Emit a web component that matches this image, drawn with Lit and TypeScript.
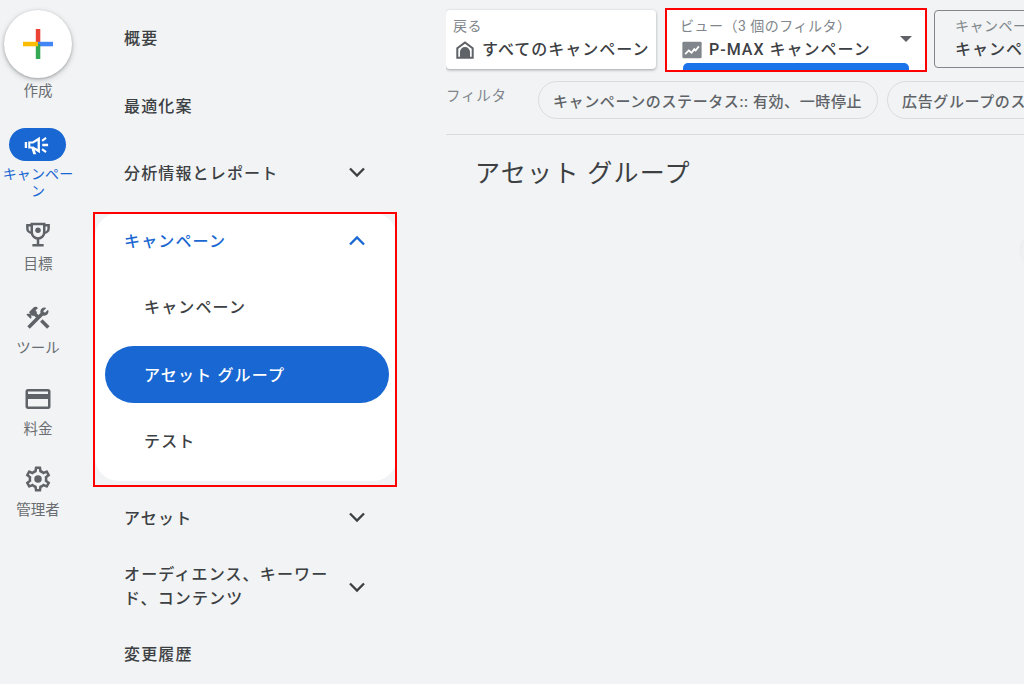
import { LitElement, html, css, svg } from "lit";
import { customElement } from "lit/decorators.js";

const chevDown = html`<svg class="chev" width="24" height="24" viewBox="0 0 24 24"><path d="M5 8.500l7 7 7-7" fill="none" stroke="currentColor" stroke-width="2.300"/></svg>`;
const chevUp = html`<svg class="chev" width="24" height="24" viewBox="0 0 24 24"><path d="M5 15.500l7-7 7 7" fill="none" stroke="currentColor" stroke-width="2.300"/></svg>`;
const icon = (d: unknown, size = 30) => html`<svg width=${size} height=${size} viewBox="0 0 24 24" fill="currentColor">${d}</svg>`;

@customElement("app-root")
export class AppRoot extends LitElement {
  static styles = css`
    :host { display: block; width: 1024px; height: 684px; overflow: hidden; position: relative; background: #f1f3f4; font-family: "Roboto", "Noto Sans CJK JP", sans-serif; color: #3c4043; }
    .page { display: flex; height: 684px; }
    .rail { width: 93px; flex: none; }
    .rail-inner { width: 76px; display: flex; flex-direction: column; align-items: center; }
    .fab { width: 68px; height: 68px; border-radius: 50%; background: #fff; margin-top: 10px; box-shadow: 0 1px 3px rgba(60,64,67,.35), 0 2px 6px rgba(60,64,67,.2); display: flex; align-items: center; justify-content: center; }
    .rail-label { font-size: 14.500px; line-height: 17px; color: #696d71; text-align: center; font-weight: 400; white-space: nowrap; }
    .l-create { margin-top: 4.500px; }
    .pill { width: 57px; height: 33px; border-radius: 17px; background: #1967d2; color: #fff; display: flex; align-items: center; justify-content: center; margin: 28.500px 2px 0 0; }
    .active-label { color: #1967d2; margin-top: 4.500px; width: 76px; white-space: normal; font-size: 14px; letter-spacing: .1px; }
    .ri { display: flex; flex-direction: column; align-items: center; color: #5f6368; }
    .ri svg { display: block; }
    .i-goal { margin-top: 19.500px; }
    .i-tool { margin-top: 31.500px; }
    .i-bill { margin-top: 27.500px; }
    .i-admin { margin-top: 26.500px; }
    .gap5 { margin-top: 6.500px; }
    .gap6 { margin-top: 7.500px; }
    .nav { width: 304px; flex: none; margin-top: 3px; box-sizing: border-box; }
    .row { height: 67.500px; display: flex; align-items: center; justify-content: space-between; padding: 0 28px 0 31px; font-size: 16px; font-weight: 500; color: #3c4043; letter-spacing: 1.150px; box-sizing: border-box; }
    .row.r-opt { padding-top: 1px; }
    .row.r-asset { height: 70px; padding-bottom: 2px; }
    .row.r-aud { height: 66px; line-height: 24px; padding-top: 1px; }
    .row.r-aud span { width: 210px; }
    .row.r-hist { height: 70px; padding-bottom: 2px; }
    .chev { color: #3c4043; flex: none; }
    .group { background: #fff; border-radius: 24px; margin: 7.500px 0 2px 2px; }
    .group .row { padding-left: 29px; padding-right: 28px; }
    .group .head { height: 56px; }
    .group .head span { margin-bottom: 2px; }
    .group .head, .group .head .chev { color: #1967d2; }
    .group .sub { padding-left: 49px; height: 77px; padding-bottom: 3px; }
    .group .sel { margin: 0 8px 0 10px; height: 57px; border-radius: 29px; background: #1967d2; color: #fff; padding-left: 39px; padding-bottom: 2px; }
    .group .last { height: 78px; padding-bottom: 4px; }
    .main { flex: 1; min-width: 0; margin-left: 49px; overflow: hidden; }
    .top { display: flex; margin-top: 10px; gap: 11px; height: 60px; width: 800px; }
    .card { height: 59px; box-sizing: border-box; border-radius: 4px; background: #fff; box-shadow: 0 1px 3px rgba(60,64,67,.45); padding: 6px 7px; flex: none; position: relative; }
    .back { width: 210px; }
    .back .big svg { margin-left: 1px; }
    .back .big { gap: 6px; }
    .view { width: 258px; padding-left: 13px; box-shadow: none; height: 60px; border-radius: 0; }
    .third { width: 200px; margin-left: -2px; background: transparent; box-shadow: none; border: 1px solid #80868b; padding: 5px 20px; height: 58px; }
    .small { font-size: 14px; line-height: 20px; color: #80868b; letter-spacing: .5px; white-space: nowrap; }
    .big { display: flex; align-items: center; gap: 7px; font-size: 16px; line-height: 24px; font-weight: 500; color: #3c4043; letter-spacing: 1px; white-space: nowrap; margin-top: 2px; }
    .view .big { gap: 6px; margin-left: 1px; }
    .big svg { color: #5f6368; flex: none; }
    .caret { position: absolute; right: 13px; top: 25.500px; width: 0; height: 0; border-left: 6px solid transparent; border-right: 6px solid transparent; border-top: 6px solid #5f6368; }
    .bar { position: absolute; left: 16px; bottom: 0; width: 226px; height: 7px; background: #1a73e8; border-radius: 5px 5px 0 0; }
    .filters { display: flex; align-items: flex-start; height: 53px; margin-top: 11px; width: 800px; border-bottom: 1px solid #dadce0; }
    .flabel { font-size: 14.500px; line-height: 18px; color: #80868b; width: 92px; flex: none; margin-top: 6.500px; letter-spacing: .75px; }
    .chip { height: 38px; box-sizing: border-box; border: 1px solid #dadce0; border-radius: 19px; padding: 0 15px 0 14px; display: flex; align-items: center; font-size: 15px; font-weight: 500; color: #5f6368; letter-spacing: .6px; margin-right: 9px; white-space: nowrap; flex: none; }
    h1 { margin: 21px 0 0 29px; font-size: 25px; line-height: 36px; font-weight: 400; color: #3c4043; letter-spacing: 1.300px; }
    .mark { position: absolute; border: 2px solid #f00; box-sizing: border-box; pointer-events: none; }
    .m1 { left: 93px; top: 212px; width: 304px; height: 275px; }
    .m2 { left: 665px; top: 8px; width: 262px; height: 64px; }
    .edge { position: absolute; left: 1021px; top: 234px; width: 32px; height: 32px; border-radius: 50%; background: #eef0f1; box-shadow: 0 0 3px rgba(60,64,67,.08); }
  `;

  render() {
    return html`
      <div class="page">
        <div class="rail"><div class="rail-inner">
          <div class="fab">
            <svg width="32" height="32" viewBox="0 0 32 32">
              <rect x="13.800" y="1" width="4.500" height="15" fill="#ea4335"/>
              <rect x="16" y="13.800" width="15" height="4.500" fill="#4285f4"/>
              <rect x="13.800" y="16" width="4.500" height="15" fill="#34a853"/>
              <rect x="1" y="13.800" width="15" height="4.500" fill="#fbbc04"/>
            </svg>
          </div>
          <div class="rail-label l-create">作成</div>
          <div class="pill">
            ${icon(svg`<path d="M1.500 9.500h2v5h-2zM4.500 9h3.500l6.500-4v14L10 16.300l1.300 3.700H8.800l-1.500-5H4.500zM6.300 10.800v2.400h2.400l3.800 2.300V8.500L8.700 10.800z"/><path d="M16.500 11h5v2h-5zM15.800 7.700l3.400-2.500 1.100 1.500-3.400 2.500zM15.800 16.300l1.100-1.500 3.400 2.500-1.100 1.500z"/>`, 28)}
          </div>
          <div class="rail-label active-label">キャンペーン</div>
          <div class="ri i-goal">
            <svg width="30" height="30" viewBox="0 0 24 24" fill="none" stroke="currentColor" stroke-width="2">
              <path d="M7 4h10v6.500a5 5 0 0 1-10 0z"/>
              <path d="M7 5H3.500v2.500A3.500 3.500 0 0 0 7 11M17 5h3.500v2.500A3.500 3.500 0 0 1 17 11M12 15.500V20M7.500 21h9"/>
              <circle cx="12" cy="9" r="2.200" fill="currentColor" stroke="none"/>
            </svg>
            <div class="rail-label gap5">目標</div>
          </div>
          <div class="ri i-tool">
            ${icon(svg`<path d="M13.783 15.172l2.121-2.121 5.996 5.996-2.121 2.121zM17.500 10c1.930 0 3.500-1.570 3.500-3.500 0-.58-.16-1.120-.41-1.600l-2.700 2.700-1.490-1.490 2.700-2.700c-.48-.25-1.020-.41-1.600-.41C15.570 3 14 4.570 14 6.500c0 .41.08.8.21 1.160l-1.850 1.850-1.780-1.780.71-.71-1.410-1.410L12 3.490a3 3 0 0 0-4.240 0L4.220 7.030l1.410 1.410H2.810l-.71.71 3.540 3.540.71-.71V9.150l1.410 1.410.71-.71 1.780 1.780-7.410 7.410 2.120 2.120L16.340 9.790c.36.13.75.21 1.160.21z"/>`, 28)}
            <div class="rail-label gap6">ツール</div>
          </div>
          <div class="ri i-bill">
            ${icon(svg`<path d="M20 4H4a2 2 0 0 0-2 2v12c0 1.100.9 2 2 2h16a2 2 0 0 0 2-2V6a2 2 0 0 0-2-2zm0 14H4v-6h16zm0-10H4V6h16z"/>`, 30)}
            <div class="rail-label gap5">料金</div>
          </div>
          <div class="ri i-admin">
            ${icon(svg`<path fill-rule="evenodd" d="M19.430 12.980c.04-.32.07-.64.07-.98s-.03-.66-.07-.98l2.110-1.650c.19-.15.24-.42.120-.64l-2-3.460c-.12-.22-.39-.3-.61-.22l-2.490 1c-.52-.4-1.080-.73-1.690-.98l-.38-2.650A.49.49 0 0 0 14 2h-4c-.25 0-.46.18-.49.42l-.38 2.650c-.61.25-1.170.59-1.690.98l-2.490-1c-.23-.09-.49 0-.61.22l-2 3.460c-.13.22-.07.49.12.64l2.110 1.650c-.04.32-.07.65-.07.98s.03.66.07.98l-2.110 1.650c-.19.15-.24.42-.12.64l2 3.460c.12.22.39.3.61.22l2.490-1c.52.4 1.080.73 1.690.98l.38 2.650c.03.24.24.42.49.42h4c.25 0 .46-.18.49-.42l.38-2.650c.61-.25 1.170-.59 1.690-.98l2.490 1c.23.09.49 0 .61-.22l2-3.460c.12-.22.07-.49-.12-.64zM17.450 11.270c.04.31.05.52.05.73s-.02.43-.05.73l-.14 1.130.89.7 1.080.84-.7 1.210-1.270-.51-1.040-.42-.9.68c-.43.32-.84.56-1.250.73l-1.060.43-.16 1.130-.2 1.350h-1.400l-.19-1.350-.16-1.130-1.060-.43c-.43-.18-.83-.41-1.230-.71l-.91-.7-1.060.43-1.270.51-.7-1.210 1.080-.84.89-.7-.14-1.130c-.03-.31-.05-.54-.05-.74s.02-.43.05-.73l.14-1.130-.89-.7-1.080-.84.7-1.210 1.270.51 1.040.42.9-.68c.43-.32.84-.56 1.250-.73l1.060-.43.16-1.130.2-1.350h1.390l.19 1.350.16 1.130 1.060.43c.43.18.83.41 1.230.71l.91.7 1.060-.43 1.270-.51.7 1.210-1.070.85-.89.7z"/><circle cx="12" cy="12" r="3"/>`, 30)}
            <div class="rail-label gap6">管理者</div>
          </div>
        </div></div>

        <nav class="nav">
          <div class="row">概要</div>
          <div class="row r-opt">最適化案</div>
          <div class="row"><span>分析情報とレポート</span>${chevDown}</div>
          <div class="group">
            <div class="row head"><span>キャンペーン</span>${chevUp}</div>
            <div class="row sub">キャンペーン</div>
            <div class="row sub sel">アセット グループ</div>
            <div class="row sub last">テスト</div>
          </div>
          <div class="row r-asset"><span>アセット</span>${chevDown}</div>
          <div class="row r-aud"><span>オーディエンス、キーワード、コンテンツ</span>${chevDown}</div>
          <div class="row r-hist">変更履歴</div>
        </nav>

        <main class="main">
          <div class="top">
            <div class="card back">
              <div class="small">戻る</div>
              <div class="big">
                <svg width="22" height="22" viewBox="0 0 24 24" fill="currentColor"><path fill-rule="evenodd" d="M12 2.500L2.500 9.500V21.500h19V9.500zM4.700 19.300v-8.700L12 5.200l7.300 5.400v8.700h-1.800v-5a5.500 5.500 0 0 0-11 0v5z"/><path d="M8.500 14.500a3.500 3.500 0 0 1 7 0v5h-7z"/></svg>
                すべてのキャンペーン
              </div>
            </div>
            <div class="card view">
              <div class="small">ビュー（3 個のフィルタ）</div>
              <div class="big">
                <svg width="22" height="22" viewBox="0 0 24 24"><rect x="1.500" y="3" width="21" height="18" rx="1.500" fill="#80868b"/><path d="M4.500 16.500l4-4 3 2.500 3-4 1.500 1.500 3.500-4.500" fill="none" stroke="#fff" stroke-width="2"/></svg>
                P-MAX キャンペーン
              </div>
              <span class="caret"></span>
              <span class="bar"></span>
            </div>
            <div class="card third">
              <div class="small">キャンペーン</div>
              <div class="big">キャンペーン</div>
            </div>
          </div>
          <div class="filters">
            <div class="flabel">フィルタ</div>
            <div class="chip">キャンペーンのステータス:: 有効、一時停止</div>
            <div class="chip">広告グループのステータス</div>
          </div>
          <h1>アセット グループ</h1>
        </main>
      </div>
      <div class="edge"></div>
      <div class="mark m1"></div>
      <div class="mark m2"></div>
    `;
  }
}
